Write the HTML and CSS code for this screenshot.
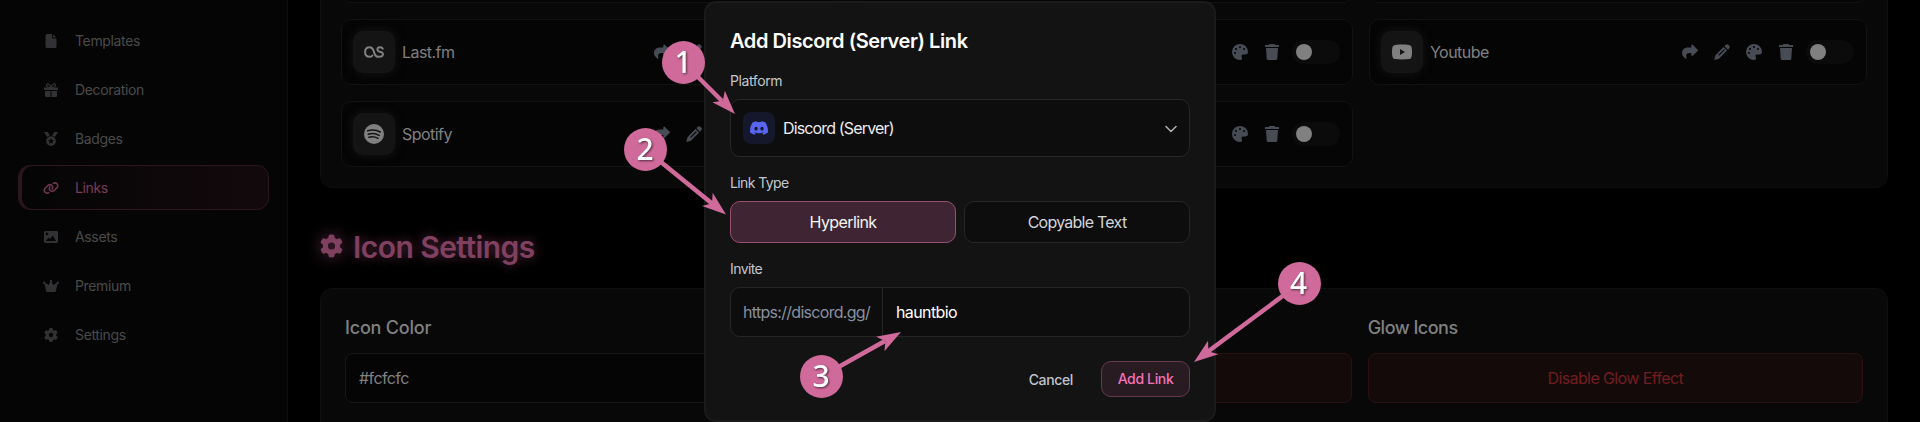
FILE: index.html
```
<!DOCTYPE html>
<html lang="en">
<head>
<meta charset="utf-8">
<title>Links</title>
<link rel="stylesheet" href="styles.css">
</head>
<body>
<svg class="sprite" xmlns="http://www.w3.org/2000/svg">
  <symbol id="gear" viewBox="0 0 512 512"><path d="M495.9 166.6c3.2 8.7 .5 18.4-6.4 24.6l-43.3 39.4c1.1 8.3 1.7 16.8 1.7 25.4s-.6 17.1-1.7 25.4l43.3 39.4c6.9 6.2 9.6 15.9 6.4 24.6c-4.4 11.9-9.7 23.3-15.8 34.3l-4.7 8.1c-6.6 11-14 21.4-22.1 31.2c-5.9 7.2-15.7 9.6-24.5 6.8l-55.7-17.7c-13.4 10.3-28.2 18.9-44 25.4l-12.5 57.1c-2 9.1-9 16.3-18.2 17.8c-13.8 2.3-28 3.5-42.5 3.5s-28.7-1.2-42.5-3.5c-9.2-1.5-16.2-8.7-18.2-17.8l-12.5-57.1c-15.8-6.5-30.6-15.1-44-25.4L83.1 425.9c-8.8 2.8-18.6 .3-24.5-6.8c-8.1-9.8-15.5-20.2-22.1-31.2l-4.7-8.1c-6.1-11-11.4-22.4-15.8-34.3c-3.2-8.7-.5-18.4 6.4-24.6l43.3-39.4C64.6 273.1 64 264.6 64 256s.6-17.1 1.7-25.4L22.4 191.2c-6.9-6.2-9.6-15.9-6.4-24.6c4.4-11.9 9.7-23.3 15.8-34.3l4.7-8.1c6.6-11 14-21.4 22.1-31.2c5.9-7.2 15.7-9.6 24.5-6.8l55.7 17.7c13.4-10.3 28.2-18.9 44-25.4l12.5-57.1c2-9.1 9-16.3 18.2-17.8C227.3 1.2 241.5 0 256 0s28.7 1.2 42.5 3.5c9.2 1.5 16.2 8.7 18.2 17.8l12.5 57.1c15.8 6.5 30.6 15.1 44 25.4l55.7-17.7c8.8-2.8 18.6-.3 24.5 6.8c8.1 9.8 15.5 20.2 22.1 31.2l4.7 8.1c6.1 11 11.4 22.4 15.8 34.3zM256 336a80 80 0 1 0 0-160 80 80 0 1 0 0 160z"/></symbol>
  <symbol id="file" viewBox="0 0 14 14"><path d="M3 0h5v3.600c0 .5.4.9.9.9h3.600V12.500a1.500 1.500 0 0 1-1.500 1.500H3a1.500 1.500 0 0 1-1.500-1.500v-11A1.500 1.500 0 0 1 3 0zM9 .2 12.300 3.500H9z"/></symbol>
  <symbol id="gift" viewBox="0 0 14 14"><path d="M0 4.500h14V7H0zM1 8h5.500v6H2a1 1 0 0 1-1-1zM7.500 8H13v5a1 1 0 0 1-1 1H7.500z"/><path class="line" stroke-width="1.200" d="M7 4.500C6.200 1 2.500-.2 2.500 2.300c0 1.400 1.500 2.200 4.500 2.200zM7 4.500C7.800 1 11.500-.2 11.500 2.300c0 1.400-1.500 2.200-4.500 2.200z"/></symbol>
  <symbol id="medal" viewBox="0 0 14 14"><path d="M0 0h3.800l2 3.600-2.600 1.500zM14 0h-3.800l-2 3.600 2.600 1.500z"/><path fill-rule="evenodd" d="M7 4.200a4.900 4.900 0 1 1 0 9.800 4.900 4.900 0 0 1 0-9.800zm0 1.900-.9 1.900-2 .3 1.500 1.400-.4 2.100L7 10.800l1.800 1-.4-2.100 1.500-1.400-2-.3z"/></symbol>
  <symbol id="chain" viewBox="0 0 640 512"><path d="M579.800 267.700c56.500-56.500 56.500-148 0-204.500c-50-50-128.800-56.500-186.300-15.400l-1.600 1.100c-14.400 10.300-17.700 30.300-7.400 44.600s30.300 17.700 44.600 7.400l1.600-1.100c32.100-22.900 76-19.300 103.800 8.600c31.500 31.500 31.500 82.500 0 114L422.300 334.800c-31.500 31.500-82.500 31.500-114 0c-27.900-27.900-31.500-71.800-8.600-103.800l1.100-1.600c10.300-14.400 6.900-34.400-7.400-44.600s-34.400-6.900-44.600 7.400l-1.100 1.600C206.500 251.200 213 330 263 380c56.500 56.500 148 56.500 204.500 0L579.800 267.700zM60.200 244.300c-56.500 56.500-56.500 148 0 204.500c50 50 128.800 56.500 186.300 15.400l1.600-1.100c14.400-10.300 17.700-30.300 7.400-44.600s-30.300-17.700-44.600-7.400l-1.600 1.100c-32.100 22.900-76 19.300-103.800-8.600C74 372 74 321 105.500 289.500L217.700 177.200c31.500-31.500 82.500-31.500 114 0c27.900 27.900 31.500 71.800 8.600 103.900l-1.100 1.600c-10.300 14.400-6.900 34.400 7.400 44.600s34.400 6.900 44.600-7.400l1.100-1.600C433.500 260.800 427 182 377 132c-56.500-56.500-148-56.500-204.500 0L60.200 244.300z"/></symbol>
  <symbol id="image" viewBox="0 0 14 14"><path fill-rule="evenodd" d="M1.500 1h11A1.500 1.500 0 0 1 14 2.500v9a1.500 1.500 0 0 1-1.500 1.500h-11A1.500 1.500 0 0 1 0 11.500v-9A1.500 1.500 0 0 1 1.500 1zM3 2.600a1.300 1.300 0 1 0 0 2.600 1.300 1.300 0 0 0 0-2.600zM2 11h10L8.800 5.400 6 9 4.500 7.600z"/></symbol>
  <symbol id="crown" viewBox="0 0 16 14"><path d="M8 1l2.200 5 3.600-2 1-.8-1.800 8.600a1.500 1.500 0 0 1-1.400 1.200H4.400A1.500 1.500 0 0 1 3 11.800L1.200 3.200l1 .8 3.600 2z"/><circle cx="8" cy="2" r="1.200"/><circle cx="1.200" cy="3.700" r="1.200"/><circle cx="14.800" cy="3.700" r="1.200"/></symbol>
  <symbol id="share" viewBox="0 0 16 16"><path d="M9.300 1.400c0-.8.800-1.100 1.400-.6l5 4.900c.4.400.4.900 0 1.300l-5 4.700c-.6.500-1.400.2-1.400-.6V9H7.800C4.600 9 3.500 10.900 4.400 13.400c.4 1-.2 1.600-1 1C1.300 13 0 11.200 0 8.900 0 5.700 2.600 3.500 6 3.500h3.300z"/></symbol>
  <symbol id="pencil" viewBox="0 0 16 16"><path fill-rule="evenodd" d="M11.600.9a2.500 2.500 0 0 1 3.500 3.500l-1.200 1.300-3.600-3.600zM9.500 2.900l3.600 3.600-7.700 7.700c-.3.300-.7.5-1.100.7L.2 16l1.100-4.100c.1-.4.300-.8.600-1.100zM10 5.200l-5.800 5.800.8.800L10.800 6z"/></symbol>
  <symbol id="palette" viewBox="0 0 16 16"><path fill-rule="evenodd" d="M8 0a8 8 0 0 1 8 8c0 1.700-1.200 2.500-2.600 2.500h-2.300c-1.400 0-2 1.300-1.400 2.300.8 1.500.4 3.200-1.700 3.200A8 8 0 0 1 8 0zM8 2a1 1 0 1 0 0 2 1 1 0 0 0 0-2zM4 4a1 1 0 1 0 0 2 1 1 0 0 0 0-2zM12 4a1 1 0 1 0 0 2 1 1 0 0 0 0-2zM3 8a1 1 0 1 0 0 2 1 1 0 0 0 0-2z"/></symbol>
  <symbol id="trash" viewBox="0 0 16 16"><path d="M5.500 0h5l.8 1H15v2H1V1h3.700zM2 4h12l-.7 10.700A1.400 1.400 0 0 1 12 16H4a1.400 1.400 0 0 1-1.300-1.300z"/></symbol>
  <symbol id="lastfm" viewBox="0 0 20 12"><path class="line" stroke-width="2" d="M8.300 9.600C7.600 10.400 6.700 10.800 5.600 10.800 2.800 10.800 1.100 8.900 1.100 6S2.900 1.200 5.600 1.200C8 1.200 8.900 2.600 9.600 4.800l.9 2.800c.7 2.200 1.800 3.200 4.300 3.200 2.400 0 4.100-.8 4.100-2.600 0-1.600-1.100-2.100-3-2.500-1.600-.3-2.500-.8-2.500-2.100 0-1.500 1.100-2.400 2.800-2.400 1.300 0 2.100.5 2.500 1.500"/></symbol>
  <symbol id="spotify" viewBox="0 0 20 20"><path d="M10 0a10 10 0 1 1 0 20 10 10 0 0 1 0-20z"/><path class="cut" d="M3.600 6.800c4.300-1.300 8.900-.9 12.700 1.200M4.300 10.200c3.700-1.100 7.700-.7 10.900 1.200M4.900 13.300c3.200-.9 6.400-.5 9.100 1"/></symbol>
  <symbol id="youtube" viewBox="0 0 20 16"><path fill-rule="evenodd" d="M3 .9c4-.5 10-.5 14 0 2 .3 3 1.600 3 7.100s-1 6.800-3 7.100c-4 .5-10 .5-14 0C1 14.800 0 13.500 0 8S1 1.200 3 .9zM8 5v6l5-3z"/></symbol>
  <symbol id="discord" viewBox="0 0 16 16"><path d="M13.545 2.907a13.2 13.2 0 0 0-3.257-1.011.05.05 0 0 0-.052.025c-.141.25-.297.577-.406.833a12.2 12.2 0 0 0-3.658 0 8 8 0 0 0-.412-.833.05.05 0 0 0-.052-.025c-1.125.194-2.22.534-3.257 1.011a.04.04 0 0 0-.021.018C.356 6.024-.213 9.047.066 12.032q.003.022.021.037a13.3 13.3 0 0 0 3.995 2.02.05.05 0 0 0 .056-.019q.463-.63.818-1.329a.05.05 0 0 0-.01-.059l-.018-.011a9 9 0 0 1-1.248-.595.05.05 0 0 1-.02-.066l.015-.019q.127-.095.248-.195a.05.05 0 0 1 .051-.007c2.619 1.196 5.454 1.196 8.041 0a.05.05 0 0 1 .053.007q.121.1.248.195a.05.05 0 0 1-.004.085 8 8 0 0 1-1.249.594.05.05 0 0 0-.03.03.05.05 0 0 0 .003.041c.24.465.515.909.817 1.329a.05.05 0 0 0 .056.019 13.2 13.2 0 0 0 4.001-2.02.05.05 0 0 0 .021-.037c.334-3.451-.559-6.449-2.366-9.106a.03.03 0 0 0-.02-.019m-8.198 7.307c-.789 0-1.438-.724-1.438-1.612s.637-1.613 1.438-1.613c.807 0 1.450.73 1.438 1.613 0 .888-.637 1.612-1.438 1.612m5.316 0c-.788 0-1.438-.724-1.438-1.612s.637-1.613 1.438-1.613c.807 0 1.451.73 1.438 1.613 0 .888-.631 1.612-1.438 1.612"/></symbol>
</svg>

<div class="page">
  <nav class="sidebar">
    <a class="nav-item"><svg class="nav-icon"><use href="#file"/></svg><span>Templates</span></a>
    <a class="nav-item"><svg class="nav-icon"><use href="#gift"/></svg><span>Decoration</span></a>
    <a class="nav-item"><svg class="nav-icon"><use href="#medal"/></svg><span>Badges</span></a>
    <a class="nav-item active"><svg class="nav-icon"><use href="#chain"/></svg><span>Links</span></a>
    <a class="nav-item"><svg class="nav-icon"><use href="#image"/></svg><span>Assets</span></a>
    <a class="nav-item"><svg class="nav-icon"><use href="#crown"/></svg><span>Premium</span></a>
    <a class="nav-item"><svg class="nav-icon"><use href="#gear"/></svg><span>Settings</span></a>
  </nav>

  <main class="content">
    <section class="panel links-panel">
      <div class="link-card"></div>
      <div class="link-card"></div>
      <div class="link-card"></div>

      <div class="link-card">
        <span class="platform"><svg class="i-lastfm"><use href="#lastfm"/></svg></span>
        <span class="name">Last.fm</span>
        <span class="actions"><svg><use href="#share"/></svg><svg><use href="#pencil"/></svg><svg><use href="#palette"/></svg><svg><use href="#trash"/></svg></span>
        <span class="toggle"></span>
      </div>
      <div class="link-card">
        <span class="actions"><svg><use href="#palette"/></svg><svg><use href="#trash"/></svg></span>
        <span class="toggle"></span>
      </div>
      <div class="link-card">
        <span class="platform"><svg class="i-youtube"><use href="#youtube"/></svg></span>
        <span class="name">Youtube</span>
        <span class="actions"><svg><use href="#share"/></svg><svg><use href="#pencil"/></svg><svg><use href="#palette"/></svg><svg><use href="#trash"/></svg></span>
        <span class="toggle"></span>
      </div>
      <div class="link-card">
        <span class="platform"><svg class="i-spotify"><use href="#spotify"/></svg></span>
        <span class="name">Spotify</span>
        <span class="actions"><svg><use href="#share"/></svg><svg><use href="#pencil"/></svg><svg><use href="#palette"/></svg><svg><use href="#trash"/></svg></span>
        <span class="toggle"></span>
      </div>
      <div class="link-card">
        <span class="actions"><svg><use href="#palette"/></svg><svg><use href="#trash"/></svg></span>
        <span class="toggle"></span>
      </div>
    </section>

    <h2 class="heading"><svg><use href="#gear"/></svg><span>Icon Settings</span></h2>

    <section class="panel settings-panel">
      <div class="field"><span class="field-label">Icon Color</span><div class="control">#fcfcfc</div></div>
      <div class="field"><span class="field-label"></span><div class="control danger"></div></div>
      <div class="field"><span class="field-label glow-label">Glow Icons</span><div class="control danger">Disable Glow Effect</div></div>
    </section>
  </main>
</div>

<div class="modal">
  <h3 class="modal-title">Add Discord (Server) Link</h3>
  <div class="group">
    <span class="label">Platform</span>
    <div class="select">
      <span class="discord"><svg><use href="#discord"/></svg></span>
      <span class="select-text">Discord (Server)</span>
      <svg class="chevron" viewBox="0 0 12 8"><path class="line" stroke-width="1.500" d="M1 1.500l5 5 5-5"/></svg>
    </div>
  </div>
  <div class="group">
    <span class="label tight">Link Type</span>
    <div class="segments">
      <div class="segment selected">Hyperlink</div>
      <div class="segment">Copyable Text</div>
    </div>
  </div>
  <div class="group">
    <span class="label tight">Invite</span>
    <div class="invite"><span class="prefix">https://discord.gg/</span><span class="value">hauntbio</span></div>
  </div>
  <div class="footer"><span class="cancel">Cancel</span><span class="add">Add Link</span></div>
</div>

<svg class="callouts" viewBox="0 0 1920 422">
  <path class="arrows" d="M683.500 62.500 722 101M645.500 149.500 712 203.500M821.500 376.500 885 341M1299.500 283.500 1208 351.500"/>
  <g class="heads">
    <path transform="translate(735 114) rotate(47)" d="M0 0-24-8.500l6 8.500-6 8.500z"/>
    <path transform="translate(726 214.500) rotate(39)" d="M0 0-24-8.500l6 8.500-6 8.500z"/>
    <path transform="translate(901 332) rotate(-30)" d="M0 0-24-8.500l6 8.500-6 8.500z"/>
    <path transform="translate(1194 362) rotate(143)" d="M0 0-24-8.500l6 8.500-6 8.500z"/>
    <circle cx="683.500" cy="62.500" r="21.500"/><circle cx="645.500" cy="149.500" r="21.500"/><circle cx="821.500" cy="376.500" r="21.500"/><circle cx="1299.500" cy="283.500" r="21.500"/>
  </g>
  <g class="digits"><text x="683" y="73">1</text><text x="645" y="160">2</text><text x="821" y="387">3</text><text x="1298.500" y="294">4</text></g>
</svg>
</body>
</html>
```
FILE: styles.css
```
* { box-sizing: border-box; }
html, body { margin: 0; height: 422px; overflow: hidden; background: #000; }
body { position: relative; font-family: Inter, "Liberation Sans", sans-serif; font-size: 16px; color: #808080; }
svg { fill: currentColor; display: block; flex: none; }
.line { fill: none; stroke: currentColor; stroke-linecap: round; stroke-linejoin: round; }
.sprite { position: absolute; width: 0; height: 0; }

.page { display: flex; height: 422px; overflow: hidden; }

.sidebar { width: 288px; flex: none; background: #050505; border-right: 1px solid #0e0e0e; padding: 18px 18px 0; display: flex; flex-direction: column; gap: 4px; }
.nav-item { height: 45px; flex: none; display: flex; align-items: center; gap: 16px; padding-left: 24px; border: 1px solid transparent; border-radius: 12px; font-size: 14px; letter-spacing: -.35px; color: #4a4a4a; }
.nav-item .nav-icon { width: 16px; height: 14px; color: #323235; }
.nav-item.active { color: #7d3a5a; border-color: #2c1620; background: linear-gradient(90deg, #050505, #13090d); box-shadow: inset 3px 0 0 #2c1620; }
.nav-item.active .nav-icon { color: #703850; }

.content { flex: 1; padding: 0 32px; }
.panel { background: #080808; border: 1px solid #0e0e0e; border-radius: 12px; }
.links-panel { margin-top: -84px; padding: 20px; display: grid; grid-template-columns: repeat(3, 1fr); grid-auto-rows: 66px; gap: 16px; }
.link-card { background: #050505; border: 1px solid #121212; border-radius: 10px; padding: 0 12px 0 11px; display: flex; align-items: center; }
.platform { width: 42px; height: 42px; border-radius: 10px; background: #141414; box-shadow: 0 0 10px #151515; display: grid; place-items: center; }
.i-lastfm { width: 20px; height: 12px; }
.i-spotify { width: 20px; height: 20px; }
.i-youtube { width: 20px; height: 16px; }
.cut { fill: none; stroke: #141414; stroke-width: 1.5; stroke-linecap: round; }
.name { margin-left: 7px; font-size: 16px; letter-spacing: -.55px; }
.actions { margin-left: auto; margin-right: 12px; display: flex; gap: 16px; color: #474b53; }
.actions svg { width: 16px; height: 16px; }
.toggle { width: 48px; height: 24px; border-radius: 12px; background: #0b0b0b; padding: 4px; }
.toggle::before { content: ""; display: block; width: 16px; height: 16px; border-radius: 50%; background: #808080; }

.heading { margin: 41px 0 0; height: 36px; display: flex; align-items: center; gap: 10px; color: #80405f; font-size: 30px; font-weight: 600; line-height: 36px; letter-spacing: -.55px; text-shadow: 0 0 12px #5c2c44; }
.heading svg { width: 23px; height: 24px; margin-top: -2px; filter: drop-shadow(0 0 8px #5c2c44); }

.settings-panel { margin-top: 23px; height: 200px; padding: 24px; display: grid; grid-template-columns: repeat(3, 1fr); gap: 16px; }
.field-label { display: block; height: 28px; line-height: 30px; font-size: 18px; font-weight: 500; letter-spacing: -.2px; margin-bottom: 12px; }
.glow-label { letter-spacing: -.5px; }
.control { height: 50px; border: 1px solid #171717; border-radius: 8px; background: #050505; padding: 0 13px; line-height: 48px; letter-spacing: -.6px; }
.danger { background: #140a0a; border-color: #2b1013; color: #731d20; text-align: center; }

.modal { position: absolute; left: 704px; top: 1px; width: 512px; height: 421px; background: #131313; border: 2px solid #1a1a1a; border-radius: 12px; padding: 24px; display: flex; flex-direction: column; gap: 16px; color: #ebebeb; }
.modal-title { margin: 0; font-size: 20px; line-height: 28px; font-weight: 600; letter-spacing: -.42px; color: #fff; }
.label { display: block; height: 20px; line-height: 20px; margin-bottom: 8px; font-size: 14px; letter-spacing: -.4px; color: #c3c7cd; }
.tight { letter-spacing: -.6px; }
.select { height: 58px; border: 1px solid #262626; border-radius: 10px; background: #0d0d0d; display: flex; align-items: center; gap: 8px; padding: 0 12px; letter-spacing: -.85px; }
.discord { width: 32px; height: 32px; border-radius: 8px; background: #15172a; color: #5865f2; display: grid; place-items: center; }
.discord svg { width: 18px; height: 18px; }
.chevron { width: 12px; height: 8px; margin: 2px 0 0 auto; color: #b0b0b0; }
.segments { display: grid; grid-template-columns: 1fr 1fr; gap: 8px; }
.segment { height: 42px; border: 1px solid #262626; border-radius: 10px; background: #0d0d0d; text-align: center; line-height: 40px; letter-spacing: -.75px; color: #d1d5db; }
.segment.selected { background: #3f2533; border-color: #96506f; letter-spacing: -.6px; color: #f5f5f5; }
.invite { height: 50px; border: 1px solid #262626; border-radius: 10px; background: #0d0d0d; display: flex; line-height: 48px; letter-spacing: -.6px; }
.prefix { width: 152px; padding-left: 12px; border-right: 1px solid #262626; letter-spacing: -.7px; color: #88909f; }
.value { padding-left: 13px; color: #fff; }
.footer { margin-top: 8px; display: flex; justify-content: flex-end; align-items: center; gap: 28px; font-size: 14px; font-weight: 500; letter-spacing: -.35px; }
.cancel { color: #c0c4ca; }
.add { width: 89px; height: 36px; border: 1px solid #66394e; border-radius: 10px; background: #291b22; color: #f472b6; text-align: center; line-height: 34px; }

.callouts { position: absolute; left: 0; top: 0; width: 1920px; height: 422px; pointer-events: none; }
.arrows { fill: none; stroke: #cf6a9b; stroke-width: 4.5; }
.heads { fill: #cf6a9b; }
.digits { font: 500 30px "Noto Sans", sans-serif; fill: #fff; text-anchor: middle; filter: drop-shadow(1px 1px 1px rgba(0, 0, 0, .6)); }
```
